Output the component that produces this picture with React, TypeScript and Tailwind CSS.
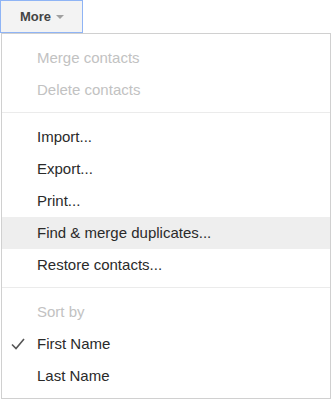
type Item = { label: string; disabled?: boolean; active?: boolean; checked?: boolean };

const groups: Item[][] = [
  [
    { label: "Merge contacts", disabled: true },
    { label: "Delete contacts", disabled: true },
  ],
  [
    { label: "Import..." },
    { label: "Export..." },
    { label: "Print..." },
    { label: "Find & merge duplicates...", active: true },
    { label: "Restore contacts..." },
  ],
  [
    { label: "Sort by", disabled: true },
    { label: "First Name", checked: true },
    { label: "Last Name" },
  ],
];

function MenuRow({ item }: { item: Item }) {
  return (
    <div
      className={`relative flex items-center h-[32px] pl-[35px] text-[15px] ${
        item.active ? "bg-[#eeeeee]" : ""
      } ${item.disabled ? "text-[#c2c2c2]" : "text-[#2a2a2a]"}`}
    >
      {item.checked && (
        <svg
          className="absolute left-[9px] top-[10px]"
          width="14"
          height="12"
          viewBox="0 0 14 12"
          fill="none"
        >
          <path d="M1 6.5 L5 10.5 L13 1" stroke="#555555" strokeWidth="1.6" />
        </svg>
      )}
      {item.label}
    </div>
  );
}

export default function App() {
  return (
    <div className="w-[331px] h-[400px] bg-white font-['Liberation_Sans',Arial,sans-serif]">
      <button className="flex items-center gap-[5px] h-[33px] w-[83px] pl-[19px] border border-[#8fb4f5] bg-[#f3f3f3] text-[13px] font-bold text-[#444444]">
        More
        <span className="w-0 h-0 border-l-[4px] border-r-[4px] border-t-[4px] border-l-transparent border-r-transparent border-t-[#a0a0a0] mt-px" />
      </button>
      <div className="ml-px w-[330px] h-[366px] border border-[#d0d0d0] pt-[8px]">
        {groups.map((g, i) => (
          <div key={i}>
            {i > 0 && <div className="h-px bg-[#ebebeb] mt-[6px] mb-[8px]" />}
            {g.map((item) => (
              <MenuRow key={item.label} item={item} />
            ))}
          </div>
        ))}
      </div>
    </div>
  );
}
